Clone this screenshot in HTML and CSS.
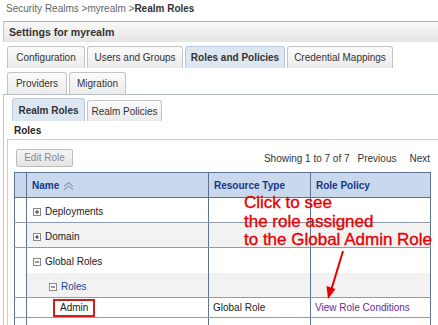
FILE: index.html
```html
<!DOCTYPE html>
<html>
<head>
<meta charset="utf-8">
<link rel="stylesheet" href="styles.css">
</head>
<body>
<div class="crumbs">Security Realms &gt;myrealm &gt;<b>Realm Roles</b></div>
<div class="settings">
  <div class="settings-head">Settings for myrealm</div>
  <div class="tabrow">
    <div class="tab w-conf">Configuration</div>
    <div class="tab w-users">Users and Groups</div>
    <div class="tab sel w-roles">Roles and Policies</div>
    <div class="tab w-cred">Credential Mappings</div>
  </div>
  <div class="tabrow">
    <div class="tab w-prov">Providers</div>
    <div class="tab w-mig">Migration</div>
  </div>
  <div class="panel">
    <div class="subtabs">
      <div class="tab sub sel w-rr">Realm Roles</div>
      <div class="tab sub w-rp">Realm Policies</div>
    </div>
    <div class="section-title">Roles</div>
    <div class="table-panel">
      <div class="toolbar">
        <div class="btn">Edit Role</div>
        <div class="pager"><span>Showing 1 to 7 of 7</span><span class="prev">Previous</span><span class="next">Next</span></div>
      </div>
      <table class="grid">
        <colgroup><col class="c-sel"><col class="c-name"><col class="c-type"><col class="c-pol"></colgroup>
        <thead>
          <tr>
            <th></th>
            <th class="th-name">Name <svg class="sort" width="11" height="8" viewBox="0 0 11 8"><path d="M1 4.2 5.5 0.8 10 4.2M1 7.4 5.5 4 10 7.4" fill="none" stroke="#8fa2bf" stroke-width="1.3"/></svg></th>
            <th>Resource Type</th>
            <th>Role Policy</th>
          </tr>
        </thead>
        <tbody>
          <tr>
            <td></td>
            <td class="lvl1"><svg class="exp" width="8" height="8" viewBox="0 0 8 8"><rect x="0.5" y="0.5" width="7" height="7" fill="#fff" stroke="#8a8a8a"/><path d="M2 4h4M4 2v4" stroke="#333"/></svg>Deployments</td>
            <td></td><td></td>
          </tr>
          <tr class="alt">
            <td></td>
            <td class="lvl1"><svg class="exp" width="8" height="8" viewBox="0 0 8 8"><rect x="0.5" y="0.5" width="7" height="7" fill="#fff" stroke="#8a8a8a"/><path d="M2 4h4M4 2v4" stroke="#333"/></svg>Domain</td>
            <td></td><td></td>
          </tr>
          <tr class="open">
            <td></td>
            <td class="lvl1"><svg class="exp" width="8" height="8" viewBox="0 0 8 8"><rect x="0.5" y="0.5" width="7" height="7" fill="#fff" stroke="#8a8a8a"/><path d="M2 4h4" stroke="#333"/></svg>Global Roles</td>
            <td></td><td></td>
          </tr>
          <tr class="alt">
            <td></td>
            <td class="lvl2"><svg class="exp" width="8" height="8" viewBox="0 0 8 8"><rect x="0.5" y="0.5" width="7" height="7" fill="#fff" stroke="#8a8a8a"/><path d="M2 4h4" stroke="#333"/></svg><span class="node">Roles</span></td>
            <td></td><td></td>
          </tr>
          <tr class="short">
            <td></td>
            <td class="lvl3"><span class="hl">Admin</span></td>
            <td class="type">Global Role</td>
            <td class="type"><span class="link">View Role Conditions</span></td>
          </tr>
          <tr>
            <td></td><td></td><td></td><td></td>
          </tr>
        </tbody>
      </table>
    </div>
  </div>
</div>
<div class="note">Click to see<br>the role assigned<br>to the Global Admin Role</div>
<svg class="arrow" width="438" height="325" viewBox="0 0 438 325"><path d="M343 251 331.5 289" stroke="#e60000" stroke-width="2" fill="none"/><path d="M328 299 326.5 286 335.5 289z" fill="#e60000"/></svg>
</body>
</html>
```

FILE: styles.css
```css
html, body {
  margin: 0;
  overflow: hidden;
  background: #fff;
}
body {
  position: relative;
  width: 438px;
  height: 325px;
  font-family: "Liberation Sans", Arial, sans-serif;
  font-size: 10px;
  color: #333;
}
.crumbs {
  height: 21px;
  line-height: 18px;
  padding-left: 6px;
  color: #666;
}
.crumbs b { color: #333; }

.settings { margin-left: 3px; }
.settings-head {
  height: 20px;
  line-height: 21px;
  border-top: 1px solid #b3b3b3;
  border-left: 1px solid #c6c6c6;
  background: linear-gradient(#f9f9f9, #e5e5e5);
  font-weight: bold;
  font-size: 10.6px;
  padding-left: 5px;
  color: #333;
}
.tabrow {
  display: flex;
  gap: 2px;
  height: 22px;
  margin-top: 4px;
  padding-left: 4px;
}
.tab {
  box-sizing: border-box;
  height: 22px;
  border: 1px solid #c4c4c4;
  border-bottom: none;
  border-radius: 3px 3px 0 0;
  background: linear-gradient(#fbfbfb, #ebebeb);
  text-align: center;
  line-height: 21px;
  color: #333;
}
.tab.sel {
  background: #dde7f2;
  border-color: #bccbdb;
  font-weight: bold;
}
.w-conf { width: 78px; }
.w-users { width: 96px; }
.w-roles { width: 100px; }
.w-cred { width: 106px; }
.w-prov { width: 60px; }
.w-mig { width: 57px; }
.w-rr { width: 73px; }
.w-rp { width: 75px; }

.panel {
  border-top: 1px solid #b7bec7;
  border-left: 1px solid #c4c4c4;
}
.subtabs {
  display: flex;
  align-items: flex-end;
  gap: 2px;
  height: 23px;
  margin-top: 3px;
  padding-left: 8px;
}
.tab.sub { height: 21px; line-height: 21px; }
.tab.sub.sel { height: 23px; line-height: 23px; }
.section-title {
  height: 16px;
  padding-top: 2px;
  line-height: 16px;
  padding-left: 10px;
  font-weight: bold;
  color: #222;
}
.table-panel {
  margin-left: 3px;
  border-top: 1px solid #cdcdcd;
  border-left: 1px solid #cdcdcd;
  padding: 9px 0 0 6px;
}
.toolbar {
  display: flex;
  align-items: center;
  justify-content: space-between;
  width: 414px;
  height: 18px;
  margin: 0 0 5px 2px;
}
.btn {
  box-sizing: border-box;
  width: 57px;
  height: 18px;
  line-height: 16px;
  border: 1px solid #bdbdbd;
  border-radius: 2px;
  background: linear-gradient(#f5f5f5, #e4e4e4);
  color: #8a8a8a;
  text-align: center;
}
.pager { display: flex; color: #333; }
.prev { margin-left: 8px; }
.next { margin-left: 13px; }

.grid {
  border-collapse: collapse;
  table-layout: fixed;
  width: 417px;
}
.c-sel { width: 12px; }
.c-name { width: 182px; }
.c-type { width: 102px; }
.c-pol { width: 120px; }
.grid th {
  height: 24px;
  padding: 0 0 0 5px;
  background: #c9d8ed;
  color: #13368a;
  font-weight: bold;
  text-align: left;
  border: 1px solid #5d7393;
}
.grid th.th-name { padding-left: 5px; }
.sort { vertical-align: -1px; margin-left: 1px; }
.grid td {
  height: 22px;
  padding: 2px 0 0 3px;
  color: #222;
  border-left: 1px solid #5d7393;
  border-right: 1px solid #5d7393;
  border-bottom: 1px solid #8d9cb4;
}
.grid tr.open td { border-bottom-color: transparent; }
.grid tr.alt td { background: #f2f2f2; }
.grid tr.alt td:first-child { background: #fff; }
.grid td.lvl1 { padding-left: 6px; }
.grid td.lvl2 { padding-left: 22px; }
.grid td.lvl3 { padding-left: 26px; }
.exp { vertical-align: -1px; margin-right: 4px; }
.node { color: #1d4896; }
.grid tr.short td { height: 19px; padding-top: 0; }
.grid td.type { padding-left: 4px; }
.hl {
  display: inline-block;
  box-sizing: border-box;
  height: 18px;
  line-height: 14px;
  padding: 0 5px;
  border: 2px solid #d11d1d;
}
.link { color: #6a2a8e; }

.note {
  position: absolute;
  left: 244px;
  top: 194px;
  font-family: "Liberation Sans", Arial, sans-serif;
  font-size: 17px;
  line-height: 18.5px;
  color: #e60000;
  -webkit-text-stroke: 0.35px #e60000;
}
.arrow {
  position: absolute;
  left: 0;
  top: 0;
}
```
